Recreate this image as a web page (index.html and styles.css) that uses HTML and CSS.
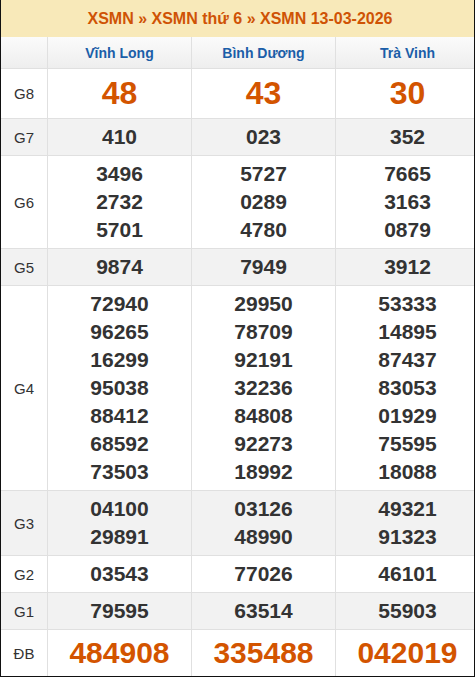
FILE: index.html
```html
<!DOCTYPE html>
<html lang="vi">
<head>
<meta charset="utf-8">
<title>XSMN 13-03-2026</title>
<link rel="stylesheet" href="styles.css">
</head>
<body>
<div class="frame">
  <div class="title">XSMN » XSMN thứ 6 » XSMN 13-03-2026</div>
  <div class="row head">
    <div class="cell"></div>
    <div class="cell prov">Vĩnh Long</div>
    <div class="cell prov">Bình Dương</div>
    <div class="cell prov">Trà Vinh</div>
  </div>
  <div class="row">
    <div class="cell label">G8</div>
    <div class="cell num big">48</div>
    <div class="cell num big">43</div>
    <div class="cell num big">30</div>
  </div>
  <div class="row alt">
    <div class="cell label">G7</div>
    <div class="cell num">410</div>
    <div class="cell num">023</div>
    <div class="cell num">352</div>
  </div>
  <div class="row">
    <div class="cell label">G6</div>
    <div class="cell num">3496<br>2732<br>5701</div>
    <div class="cell num">5727<br>0289<br>4780</div>
    <div class="cell num">7665<br>3163<br>0879</div>
  </div>
  <div class="row alt">
    <div class="cell label">G5</div>
    <div class="cell num">9874</div>
    <div class="cell num">7949</div>
    <div class="cell num">3912</div>
  </div>
  <div class="row">
    <div class="cell label">G4</div>
    <div class="cell num">72940<br>96265<br>16299<br>95038<br>88412<br>68592<br>73503</div>
    <div class="cell num">29950<br>78709<br>92191<br>32236<br>84808<br>92273<br>18992</div>
    <div class="cell num">53333<br>14895<br>87437<br>83053<br>01929<br>75595<br>18088</div>
  </div>
  <div class="row alt">
    <div class="cell label">G3</div>
    <div class="cell num">04100<br>29891</div>
    <div class="cell num">03126<br>48990</div>
    <div class="cell num">49321<br>91323</div>
  </div>
  <div class="row">
    <div class="cell label">G2</div>
    <div class="cell num">03543</div>
    <div class="cell num">77026</div>
    <div class="cell num">46101</div>
  </div>
  <div class="row alt">
    <div class="cell label">G1</div>
    <div class="cell num">79595</div>
    <div class="cell num">63514</div>
    <div class="cell num">55903</div>
  </div>
  <div class="row last">
    <div class="cell label">ĐB</div>
    <div class="cell num db">484908</div>
    <div class="cell num db">335488</div>
    <div class="cell num db">042019</div>
  </div>
</div>
</body>
</html>
```
FILE: styles.css
```css
html, body {
  margin: 0;
  padding: 0;
  background: #ffffff;
}
body {
  font-family: "Liberation Sans", Arial, sans-serif;
}
.frame {
  width: 475px;
  height: 677px;
  box-sizing: border-box;
  border-left: 1px solid #111;
  border-right: 1px solid #111;
  border-bottom: 1px solid #111;
  overflow: hidden;
  background: #fff;
}
.title {
  width: 478px;
  height: 37px;
  line-height: 37px;
  background: #f8e9b9;
  color: #cf5305;
  font-weight: bold;
  font-size: 16px;
  text-align: center;
}
.row {
  display: grid;
  grid-template-columns: 46px 143px 143px 143px;
  column-gap: 1px;
  width: 478px;
  background: #e0e0e0;
  border-bottom: 1px solid #e0e0e0;
}
.row.last {
  border-bottom: none;
}
.cell {
  background: #fff;
  display: flex;
  flex-direction: column;
  justify-content: center;
  align-items: center;
  text-align: center;
  padding: 4px 0;
}
.row.alt .cell {
  background: #f2f2f2;
}
.head .cell {
  height: 31px;
  padding: 0;
  box-sizing: border-box;
  background: linear-gradient(#fbfbfb, #eeeeee);
}
.prov {
  color: #1b5ea8;
  font-weight: bold;
  font-size: 14px;
}
.label {
  color: #333;
  font-size: 15px;
}
.num {
  display: block;
  color: #333;
  font-weight: bold;
  font-size: 21px;
  line-height: 28px;
}
.num.big {
  color: #d35400;
  font-size: 32px;
  line-height: 41px;
}
.num.db {
  color: #d35400;
  font-size: 30px;
  line-height: 38px;
}
```
